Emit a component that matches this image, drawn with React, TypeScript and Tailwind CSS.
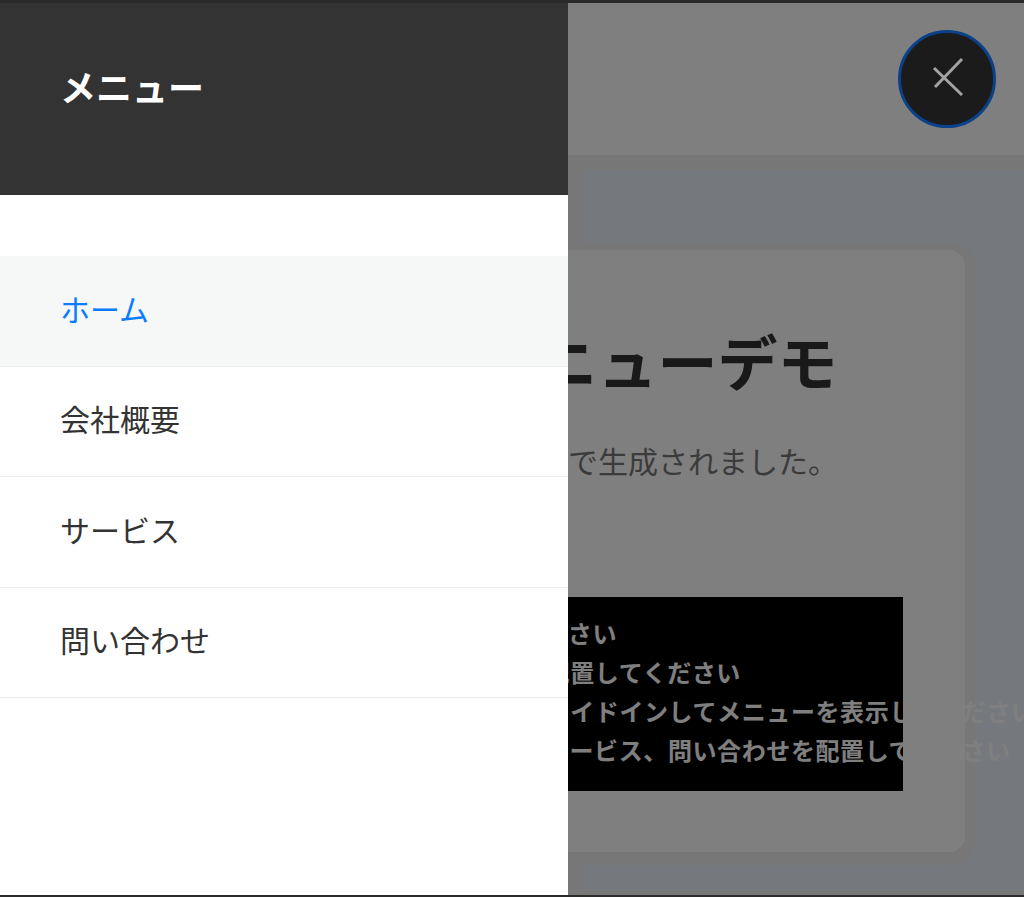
import React from 'react';

const menuItems = ['ホーム', '会社概要', 'サービス', '問い合わせ'];

const requirements = [
  'ハンバーガーメニューを実装してください',
  'メニューボタンはヘッダーの右上に配置してください',
  'ボタンをクリックしたら、左からスライドインしてメニューを表示してください',
  'メニュー内にはホーム、会社概要、サービス、問い合わせを配置してください',
];

function CloseButton() {
  return (
    <button className="relative z-30 flex h-[98px] w-[98px] items-center justify-center rounded-full border-[3px] border-[#0a4189] bg-[#1b1b1b]">
      <svg
        className="absolute left-[-3px] top-[-3px]"
        width="98"
        height="98"
        viewBox="0 0 98 98"
        fill="none"
        stroke="#a3a3a3"
        strokeWidth="3"
      >
        <path d="M64 29 L37 57" />
        <path d="M36 38 L64 65" />
      </svg>
    </button>
  );
}

function SideMenu() {
  return (
    <aside className="absolute bottom-0 left-0 top-0 z-20 flex w-[568px] flex-col bg-white">
      <div className="flex h-[192px] items-center bg-[#333333] px-[60px] pb-[26px]">
        <h2 className="text-[36px] font-bold text-white">メニュー</h2>
      </div>
      <nav className="pt-[61px]">
        <ul>
          {menuItems.map((item, i) => (
            <li key={item}>
              <a
                href="#"
                className={
                  i === 0
                    ? 'flex h-[110.5px] items-center border-b border-[#ececec] bg-[#f6f7f7] px-[60px] pb-[5px] text-[30px] text-[#0a7cff]'
                    : 'flex h-[110.5px] items-center border-b border-[#ececec] px-[60px] pb-[5px] text-[30px] text-[#333333]'
                }
              >
                {item}
              </a>
            </li>
          ))}
        </ul>
      </nav>
    </aside>
  );
}

export default function App() {
  return (
    <div className="flex h-[897px] w-full flex-col overflow-hidden bg-[#262626] font-['Noto_Sans_CJK_JP','Noto_Sans',sans-serif]">
      <div className="h-[3px] bg-[#2a2a2a]" />
      <div className="relative flex flex-1 flex-col bg-[#eaf0fb]">
        <header className="flex h-[152px] items-center justify-end bg-white pr-[28px]">
          <CloseButton />
        </header>
        <div className="h-[15px] bg-[#eeeeee]" />
        <div className="flex h-[73px]">
          <div className="w-[583px] bg-[#eeeeee]" />
          <div className="flex-1 rounded-tl-[4px] bg-[#eaf0fb]" />
        </div>
        <div className="flex h-[622px]">
          <div className="w-[975px] rounded-r-[22px] bg-[#eeeeee] pb-[13px] pr-[10px] pt-[7px]">
            <main className="h-full rounded-r-[16px] bg-white pl-[120px] pt-[74px]">
              <h1 className="text-[60px] font-bold leading-[72px] text-[#333333]">
                ハンバーガーメニューデモ
              </h1>
              <p className="mt-[42px] text-[30px] leading-[45px] text-[#777777]">
                このサンプルはＡＩアシスタントで生成されました。
              </p>
              <div className="mt-[114px] h-[194px] w-[783px] bg-black px-8 pb-[22px] pt-[16px]">
                {requirements.map((line) => (
                  <p
                    key={line}
                    className="whitespace-nowrap text-[24px] font-bold leading-[39px] tracking-wide text-white"
                  >
                    {line}
                  </p>
                ))}
              </div>
            </main>
          </div>
        </div>
        <div className="flex h-[25px]">
          <div className="w-[583px] bg-[#eeeeee]" />
          <div className="flex-1 rounded-tl-[4px] bg-[#eaf0fb]" />
        </div>
        <div className="h-[5px] bg-[#eeeeee]" />

        <div className="absolute inset-0 z-10 bg-black/50" />
        <SideMenu />
      </div>
      <div className="h-[2px] bg-[#2a2a2a]" />
    </div>
  );
}
